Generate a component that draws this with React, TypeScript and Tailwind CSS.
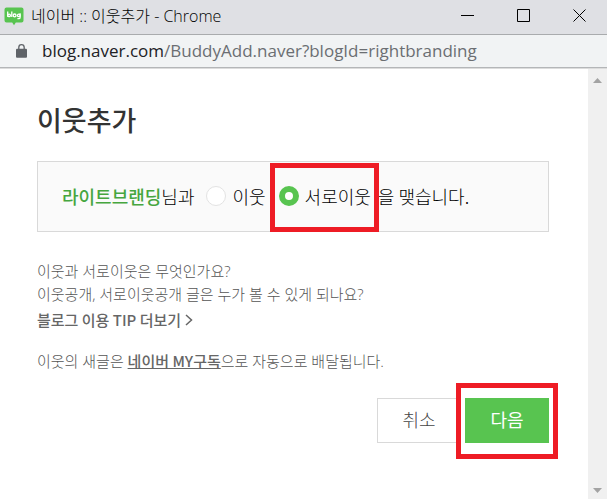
import { useState, type ReactNode } from "react";

function BlogIcon() {
  return (
    <svg width="20" height="19" viewBox="0 0 20 19" aria-hidden="true" className="shrink-0">
      <path
        d="M2.5 0.5h15a2 2 0 0 1 2 2v11a2 2 0 0 1-2 2h-5.7L10 18.2l-1.8-2.7H2.5a2 2 0 0 1-2-2v-11a2 2 0 0 1 2-2z"
        fill="#58c450"
      />
      <g fill="none" stroke="#fff" strokeWidth="1.3">
        <path d="M3.7 4.4v5.4M7.8 4.4v5.5M16.1 6.2v4.3q0 1.2-1.4 1.2h-1.3" />
        <circle cx="5.1" cy="8.4" r="1.3" />
        <circle cx="10.6" cy="8.4" r="1.4" />
        <circle cx="14.8" cy="8.4" r="1.3" />
      </g>
    </svg>
  );
}

function TitleBar() {
  return (
    <header className="flex h-[35px] items-center border-b border-[#a9abad] bg-[#dfe0e4] pb-0.5 pl-1">
      <BlogIcon />
      <h1 className="ml-[7px] grow truncate text-base leading-6 font-light text-black">
        네이버 :: 이웃추가 - Chrome
      </h1>
      <button type="button" aria-label="최소화" className="flex w-14 justify-center pb-0.5">
        <svg width="13" height="13" viewBox="0 0 13 13" stroke="#000" fill="none" aria-hidden="true">
          <path d="M0 6.5h13" />
        </svg>
      </button>
      <button type="button" aria-label="최대화" className="flex w-14 justify-center pb-0.5">
        <svg width="13" height="13" viewBox="0 0 13 13" stroke="#000" fill="none" aria-hidden="true">
          <path d="M.5 .5h12v12H.5z" />
        </svg>
      </button>
      <button type="button" aria-label="닫기" className="flex w-14 justify-center pb-0.5">
        <svg width="13" height="13" viewBox="0 0 13 13" stroke="#000" fill="none" aria-hidden="true">
          <path d="M.5 .5l12 12M12.5 .5l-12 12" />
        </svg>
      </button>
    </header>
  );
}

function AddressBar() {
  return (
    <div className="flex h-[33px] items-center border-b border-[#b4b6b8] bg-[#f1f3f4] pl-4">
      <svg width="11" height="14" viewBox="0 0 11 14" aria-hidden="true" className="shrink-0">
        <path d="M2.8 5.5V3.4a2.7 2.7 0 0 1 5.4 0v2.1" fill="none" stroke="#5f6368" strokeWidth="1.3" />
        <rect x="0" y="4.8" width="11" height="9" rx="1" fill="#5f6368" />
      </svg>
      <p className="ml-[15px] truncate text-[17px] leading-6 text-[#6b6e72]">
        <span className="text-[#202124]">blog.naver.com</span>/BuddyAdd.naver?blogId=rightbranding
      </p>
    </div>
  );
}

function Highlight({ className }: { className: string }) {
  return (
    <span
      aria-hidden="true"
      className={`pointer-events-none absolute border-5 border-[#ee1c25] ${className}`}
    />
  );
}

type RadioProps = {
  value: string;
  checked: boolean;
  onChange: (value: string) => void;
  children: ReactNode;
};

function Radio({ value, checked, onChange, children }: RadioProps) {
  return (
    <label className="relative flex items-center gap-1.5">
      <input
        type="radio"
        name="relation"
        value={value}
        checked={checked}
        onChange={() => onChange(value)}
        className="size-5 appearance-none rounded-full border border-[#e3e3e3] bg-white checked:border-6 checked:border-[#58c450]"
      />
      {children}
    </label>
  );
}

function Scrollbar() {
  return (
    <div className="flex w-[19px] shrink-0 flex-col items-center justify-between bg-[#f0f0f0] pt-[9px] pb-[6px]" aria-hidden="true">
      <svg width="9" height="5" viewBox="0 0 9 5" fill="#a3a3a3">
        <path d="M0 5L4.5 0 9 5z" />
      </svg>
      <svg width="9" height="5" viewBox="0 0 9 5" fill="#a3a3a3">
        <path d="M0 0l4.5 5L9 0z" />
      </svg>
    </div>
  );
}

export default function App() {
  const [relation, setRelation] = useState("mutual");

  return (
    <div className="flex min-h-screen flex-col bg-white font-['Open_Sans','Noto_Sans_CJK_KR',sans-serif]">
      <TitleBar />
      <AddressBar />
      <div className="flex grow border-t border-[#dcdcdc]">
        <main className="grow pt-[34px] pr-[39px] pb-10 pl-[37px]">
          <h2 className="text-[27px] leading-9 font-medium text-[#333]">이웃추가</h2>

          <form onSubmit={(event) => event.preventDefault()}>
            <div className="mt-[22px] flex h-[71px] items-center border border-[#d9d9d9] bg-[#fafafa] pb-0.5 pl-6 font-['Noto_Sans_CJK_KR',sans-serif] text-lg font-light whitespace-nowrap text-black">
              <p>
                <strong className="font-medium text-[#46a63f]">라이트브랜딩</strong>님과
              </p>
              <div className="ml-3 flex gap-[13px]">
                <Radio value="one-way" checked={relation === "one-way"} onChange={setRelation}>
                  이웃
                </Radio>
                <Radio value="mutual" checked={relation === "mutual"} onChange={setRelation}>
                  서로이웃
                  <Highlight className="-top-[19px] -right-2 -bottom-[22px] -left-[9px]" />
                </Radio>
              </div>
              <p className="ml-[7px]">을 맺습니다.</p>
            </div>

            <div className="mt-7 text-[15px] leading-[23px] font-light text-[#555]">
              <p>
                <a href="#about">이웃과 서로이웃은 무엇인가요?</a>
              </p>
              <p>
                <a href="#visibility">이웃공개, 서로이웃공개 글은 누가 볼 수 있게 되나요?</a>
              </p>
              <p className="mt-0.5 font-['Noto_Sans_CJK_KR',sans-serif] font-medium text-[#666]">
                <a href="#tips" className="inline-flex items-center gap-1">
                  블로그 이용 TIP 더보기
                  <svg width="8" height="12" viewBox="0 0 8 12" fill="none" stroke="#666" strokeWidth="1.5" aria-hidden="true">
                    <path d="M1 1l5.5 5L1 11" />
                  </svg>
                </a>
              </p>
              <p className="mt-[18px]">
                이웃의 새글은{" "}
                <a
                  href="#subscriptions"
                  className="font-['Noto_Sans_CJK_KR',sans-serif] font-medium text-[#666] underline"
                >
                  네이버 MY구독
                </a>
                으로 자동으로 배달됩니다.
              </p>
            </div>

            <div className="mt-[25px] flex justify-end gap-1 text-lg font-light">
              <button type="button" className="h-[45px] w-[84px] border border-[#d9d9d9] bg-white pb-0.5 text-[#444]">
                취소
              </button>
              <div className="relative">
                <button type="submit" className="h-[45px] w-[84px] bg-[#58c450] pb-0.5 font-normal text-white">
                  다음
                </button>
                <Highlight className="-inset-x-[9px] -top-[15px] -bottom-4" />
              </div>
            </div>
          </form>
        </main>
        <Scrollbar />
      </div>
    </div>
  );
}
